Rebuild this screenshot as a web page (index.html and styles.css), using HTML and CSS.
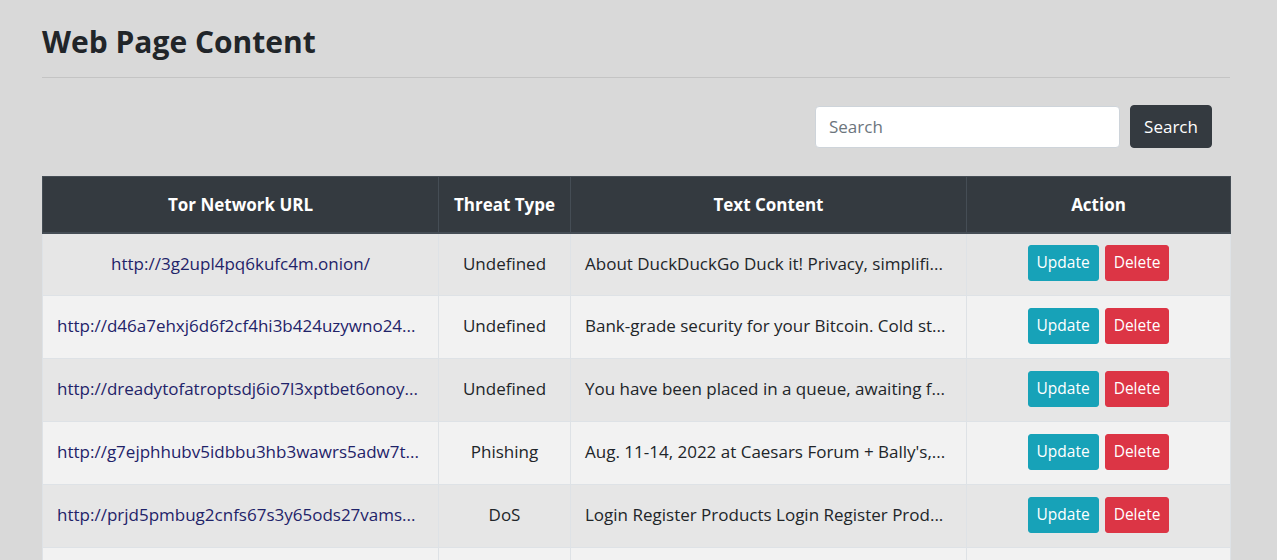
FILE: index.html
```html
<!DOCTYPE html>
<html lang="en">
<head>
<meta charset="utf-8">
<title>Web Page Content</title>
<link rel="stylesheet" href="styles.css">
</head>
<body>
<div class="container">
  <h2 class="title">Web Page Content</h2>
  <hr class="rule">
  <form class="search-row">
    <input class="search-input" type="text" placeholder="Search">
    <button class="btn btn-dark" type="button">Search</button>
  </form>
  <table class="data-table">
    <colgroup>
      <col class="c-url"><col class="c-type"><col class="c-text"><col class="c-action">
    </colgroup>
    <thead>
      <tr><th>Tor Network URL</th><th>Threat Type</th><th>Text Content</th><th>Action</th></tr>
    </thead>
    <tbody>
      <tr class="odd">
        <td class="url center"><a href="#">http://3g2upl4pq6kufc4m.onion/</a></td>
        <td class="center">Undefined</td>
        <td class="text">About DuckDuckGo Duck it! Privacy, simplifi...</td>
        <td class="center"><span class="actions"><button class="btn btn-info" type="button">Update</button><button class="btn btn-danger" type="button">Delete</button></span></td>
      </tr>
      <tr class="even">
        <td class="url"><a href="#">http://d46a7ehxj6d6f2cf4hi3b424uzywno24...</a></td>
        <td class="center">Undefined</td>
        <td class="text">Bank-grade security for your Bitcoin. Cold st...</td>
        <td class="center"><span class="actions"><button class="btn btn-info" type="button">Update</button><button class="btn btn-danger" type="button">Delete</button></span></td>
      </tr>
      <tr class="odd">
        <td class="url"><a href="#">http://dreadytofatroptsdj6io7l3xptbet6onoy...</a></td>
        <td class="center">Undefined</td>
        <td class="text">You have been placed in a queue, awaiting f...</td>
        <td class="center"><span class="actions"><button class="btn btn-info" type="button">Update</button><button class="btn btn-danger" type="button">Delete</button></span></td>
      </tr>
      <tr class="even">
        <td class="url"><a href="#">http://g7ejphhubv5idbbu3hb3wawrs5adw7t...</a></td>
        <td class="center">Phishing</td>
        <td class="text">Aug. 11-14, 2022 at Caesars Forum + Bally's,...</td>
        <td class="center"><span class="actions"><button class="btn btn-info" type="button">Update</button><button class="btn btn-danger" type="button">Delete</button></span></td>
      </tr>
      <tr class="odd">
        <td class="url"><a href="#">http://prjd5pmbug2cnfs67s3y65ods27vams...</a></td>
        <td class="center">DoS</td>
        <td class="text">Login Register Products Login Register Prod...</td>
        <td class="center"><span class="actions"><button class="btn btn-info" type="button">Update</button><button class="btn btn-danger" type="button">Delete</button></span></td>
      </tr>
      <tr class="even">
        <td class="url"><a href="#">&nbsp;</a></td>
        <td class="center">&nbsp;</td>
        <td class="text">&nbsp;</td>
        <td class="center">&nbsp;</td>
      </tr>
    </tbody>
  </table>
</div>
</body>
</html>
```
FILE: styles.css
```css
* { box-sizing: border-box; }
html, body { margin: 0; padding: 0; }
body {
  background: #d9d9d9;
  color: #212529;
  font-family: "Open Sans", "Noto Sans", sans-serif;
  font-size: 17px;
  line-height: 1.5;
}
.container {
  width: 1188px;
  margin-left: 42px;
  padding-top: 20px;
}
.title {
  margin: 0;
  font-size: 30px;
  font-weight: 700;
  line-height: 44px;
  color: #212529;
}
.rule {
  margin: 13px 0 0;
  border: 0;
  border-top: 1px solid #c4c4c4;
}
.search-row {
  display: flex;
  justify-content: flex-end;
  align-items: center;
  gap: 10px;
  padding-right: 18px;
  margin-top: 27px;
}
.search-input {
  width: 305px;
  height: 42px;
  padding: 6px 13px;
  border: 1px solid #ced4da;
  border-radius: 4px;
  background: #fff;
  font: inherit;
  color: #495057;
}
.search-input::placeholder { color: #6c757d; }
.btn {
  font: inherit;
  border: 1px solid transparent;
  border-radius: 4px;
  color: #fff;
  cursor: pointer;
}
.btn-dark {
  height: 43px;
  width: 82px;
  padding: 0;
  background: #343a40;
  border-color: #343a40;
}
.data-table {
  width: 1188px;
  margin-top: 28px;
  border-collapse: collapse;
  table-layout: fixed;
}
.c-url { width: 396px; }
.c-type { width: 132px; }
.c-text { width: 396px; }
.c-action { width: 264px; }
.data-table th {
  height: 56px;
  background: #343a40;
  color: #fff;
  font-weight: 700;
  text-align: center;
  border: 1px solid #454d55;
  border-bottom: 2px solid #454d55;
  padding: 0 14px;
}
.data-table td {
  height: 63px;
  padding: 0 14px 2px;
  border: 1px solid #dee2e6;
  white-space: nowrap;
  overflow: hidden;
  text-overflow: ellipsis;
  vertical-align: middle;
}
.data-table tr.odd td { background: #e6e6e6; }
.data-table tr.even td { background: #f2f2f2; }
.center { text-align: center; }
.url a { color: #1f2369; text-decoration: none; }
.actions { display: inline-flex; gap: 6px; vertical-align: middle; }
.btn-info, .btn-danger {
  font-size: 15.5px;
  line-height: 1.5;
  padding: 5px 8px 6px;
  border-radius: 3px;
}
.btn-info { background: #17a2b8; border-color: #17a2b8; }
.btn-danger { background: #dc3545; border-color: #dc3545; }
```
